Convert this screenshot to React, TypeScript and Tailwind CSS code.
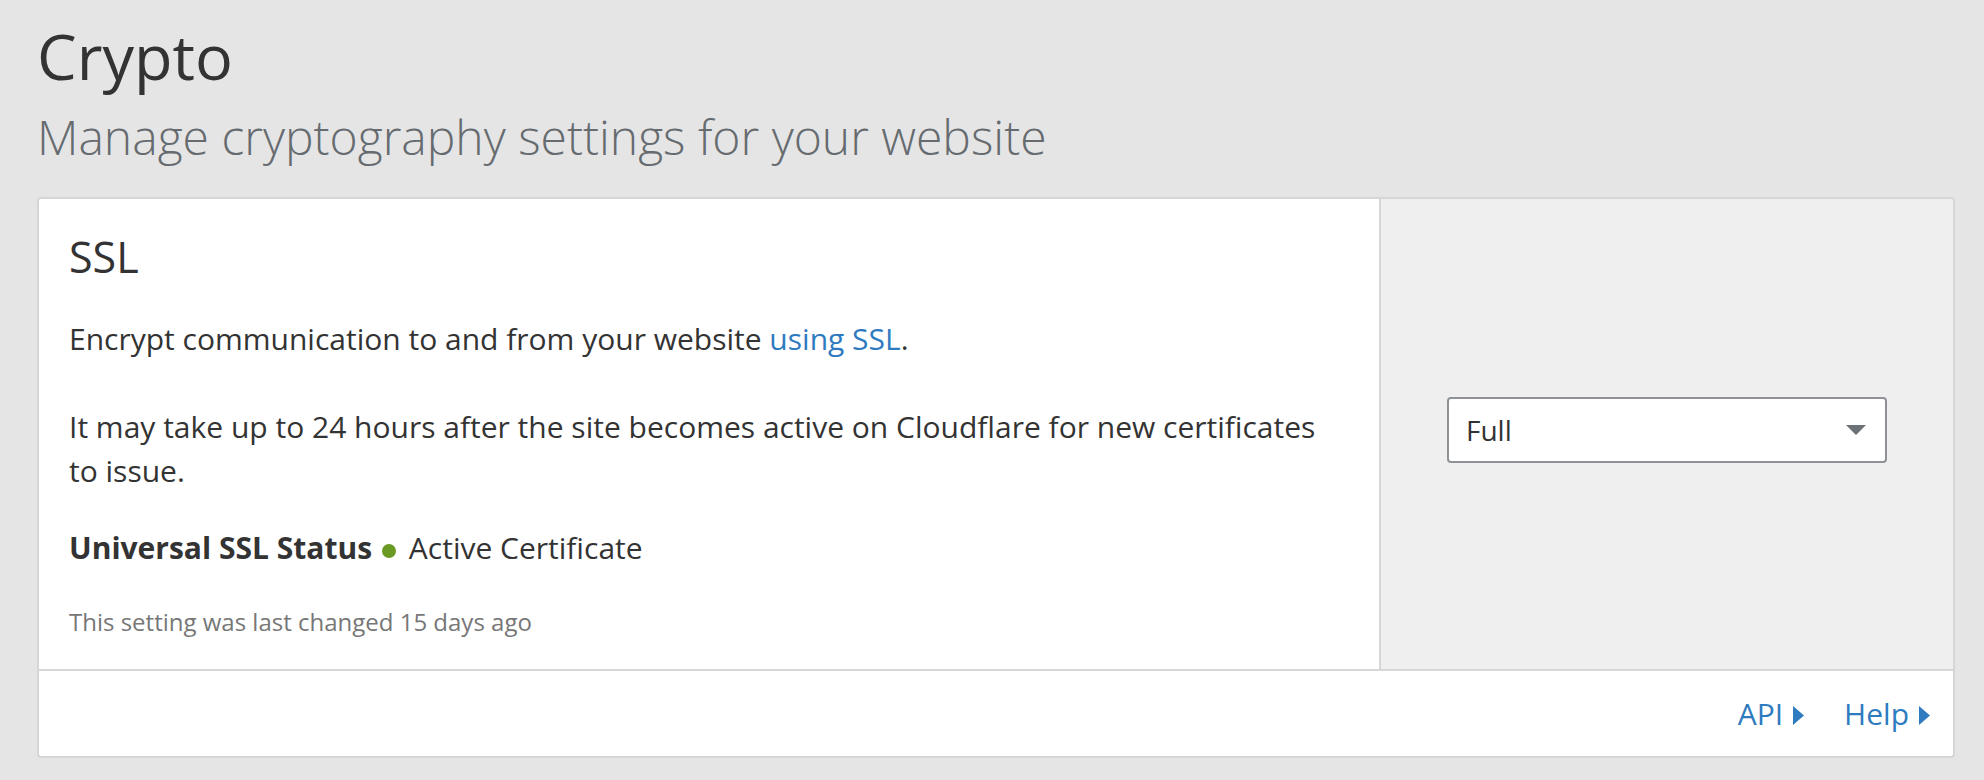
import { ReactNode } from 'react'

const FONT = { fontFamily: '"Open Sans", "Liberation Sans", sans-serif' }

function CaretDown() {
  return (
    <svg width="20" height="10" viewBox="0 0 20 10" aria-hidden>
      <path d="M0 0h20L10 10z" fill="#6d7277" />
    </svg>
  )
}

function CaretRight() {
  return (
    <svg width="11" height="19" viewBox="0 0 11 19" aria-hidden className="mt-[4px]">
      <path d="M0 0l11 9.5L0 19z" fill="currentColor" />
    </svg>
  )
}

function FooterLink({ children }: { children: ReactNode }) {
  return (
    <a href="#" className="flex items-center gap-[10px] text-[#2f7bbf]">
      {children}
      <CaretRight />
    </a>
  )
}

export default function App() {
  return (
    <div style={FONT} className="min-h-screen bg-[#e5e5e5] pl-[37px] pr-[29px] pt-[20px] text-[#333]">
      {/* Page header */}
      <h1 className="text-[63px] font-normal leading-[72px] text-[#333]">Crypto</h1>
      <p className="mt-[18px] text-[48px] font-light leading-[54px] text-[#666b70]">
        Manage cryptography settings for your website
      </p>

      {/* SSL card */}
      <div className="mt-[33px] overflow-hidden rounded-[4px] border-2 border-[#d6d6d6] bg-white">
        <div className="flex">
          <div className="flex-1 pb-[29px] pl-[30px] pr-[48px] pt-[32px]">
            <h2 className="text-[43px] font-normal leading-[52px]">SSL</h2>
            <p className="mt-[34px] text-[30px] leading-[44px]">
              Encrypt communication to and from your website{' '}
              <a href="#" className="text-[#2f7bbf]">
                using SSL
              </a>
              .
            </p>
            <p className="mt-[44px] text-[30px] leading-[44px]">
              It may take up to 24 hours after the site becomes active on Cloudflare for new certificates to issue.
            </p>
            <p className="mt-[33px] text-[30px] leading-[44px]">
              <strong className="font-bold">Universal SSL Status</strong>{' '}
              <span className="ml-[2px] mr-[13px] inline-block h-[14px] w-[14px] rounded-full bg-[#6b9a24] align-middle" />
              Active Certificate
            </p>
            <p className="mt-[34px] text-[24px] leading-[36px] text-[#777]">
              This setting was last changed 15 days ago
            </p>
          </div>

          <div className="flex w-[574px] shrink-0 items-center justify-center border-l-2 border-[#d6d6d6] bg-[#efefef] px-[66px]">
            <button className="-mt-[8px] flex h-[66px] w-full items-center justify-between rounded-[4px] border-2 border-[#8e9297] bg-white pl-[17px] pr-[19px] text-left text-[28px] text-[#333]">
              <span>Full</span>
              <CaretDown />
            </button>
          </div>
        </div>

        <div className="flex h-[87px] items-center justify-end gap-[40px] border-t-2 border-[#d6d6d6] pr-[23px] text-[30px] leading-[44px]">
          <FooterLink>API</FooterLink>
          <FooterLink>Help</FooterLink>
        </div>
      </div>
    </div>
  )
}
